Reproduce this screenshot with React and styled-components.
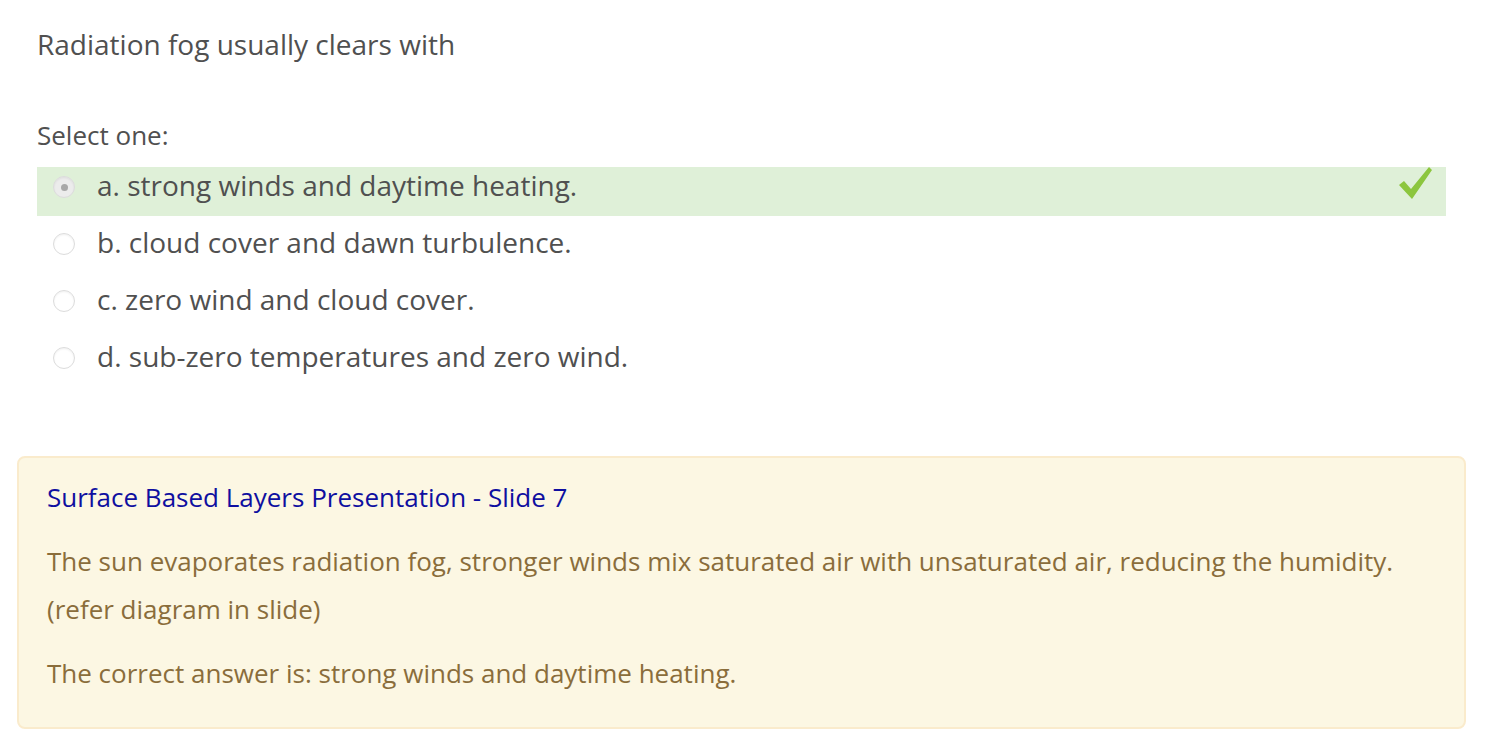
import React from 'react';
import styled, { createGlobalStyle } from 'styled-components';

const GlobalStyle = createGlobalStyle`
  body {
    margin: 0;
    background: #fff;
    font-family: "Open Sans", "Liberation Sans", sans-serif;
  }
`;

const options = [
  { key: 'a', text: 'strong winds and daytime heating.', chosen: true },
  { key: 'b', text: 'cloud cover and dawn turbulence.' },
  { key: 'c', text: 'zero wind and cloud cover.' },
  { key: 'd', text: 'sub-zero temperatures and zero wind.' },
];

function Tick() {
  return (
    <svg width="36" height="34" viewBox="0 0 36 34">
      <path d="M2 18 L7 14 L14 22 L32 0 L35 3 L15 32 Z" fill="#8cc63e" />
    </svg>
  );
}

export default function App() {
  return (
    <Page>
      <GlobalStyle />
      <Question>
        <QText>Radiation fog usually clears with</QText>
        <Prompt>Select one:</Prompt>
        <Answers>
          {options.map((o) => (
            <Answer key={o.key} correct={o.chosen}>
              <Radio checked={o.chosen} />
              <Label>{o.key}. {o.text}</Label>
              {o.chosen && <TickWrap><Tick /></TickWrap>}
            </Answer>
          ))}
        </Answers>
      </Question>
      <Feedback>
        <FbLink href="#">Surface Based Layers Presentation - Slide 7</FbLink>
        <FbText>
          The sun evaporates radiation fog, stronger winds mix saturated air with unsaturated air, reducing the humidity.
          <br />
          (refer diagram in slide)
        </FbText>
        <FbText>The correct answer is: strong winds and daytime heating.</FbText>
      </Feedback>
    </Page>
  );
}

const Page = styled.div`
  padding: 24px 36px 0 17px;
  width: 1449px;
  box-sizing: content-box;
`;

const Question = styled.div`
  padding: 0 20px;
  color: #505050;
`;

const QText = styled.div`
  font-size: 28px;
  line-height: 40px;
  margin-bottom: 51px;
`;

const Prompt = styled.div`
  font-size: 26px;
  line-height: 40px;
  margin-bottom: 12px;
`;

const Answers = styled.div`
  display: flex;
  flex-direction: column;
  gap: 8px;
  margin-bottom: 69px;
`;

const Answer = styled.div`
  display: flex;
  align-items: flex-start;
  height: 49px;
  box-sizing: border-box;
  padding: 9px 0 0 16px;
  background: ${(p) => (p.correct ? '#dff0d8' : 'transparent')};
  position: relative;
`;

const Radio = styled.span`
  width: 22px;
  height: 22px;
  margin-top: 0;
  border-radius: 50%;
  box-sizing: border-box;
  border: 1px solid #dcdcdc;
  background: ${(p) => (p.checked ? '#ececec' : '#fff')};
  box-shadow: inset 0 1px 2px rgba(0, 0, 0, 0.06);
  display: flex;
  align-items: center;
  justify-content: center;
  margin-right: 22px;
  &::after {
    content: '';
    display: ${(p) => (p.checked ? 'block' : 'none')};
    width: 7px;
    height: 7px;
    border-radius: 50%;
    background: #a8a8a8;
  }
`;

const Label = styled.span`
  font-size: 28px;
  line-height: 28px;
  margin-top: -5px;
  color: #505050;
`;

const TickWrap = styled.span`
  position: absolute;
  right: 13px;
  top: 0;
  line-height: 0;
`;

const Feedback = styled.div`
  background: #fcf7e3;
  border: 2px solid #faebcc;
  border-radius: 8px;
  padding: 19px 28px 0;
  color: #8a6d3b;
  height: 273px;
  box-sizing: border-box;
`;

const FbLink = styled.a`
  display: block;
  font-size: 26px;
  line-height: 40px;
  color: #0f0fa0;
  text-decoration: none;
  margin-bottom: 20px;
`;

const FbText = styled.p`
  margin: 0 0 16px;
  font-size: 26px;
  line-height: 48px;
`;
